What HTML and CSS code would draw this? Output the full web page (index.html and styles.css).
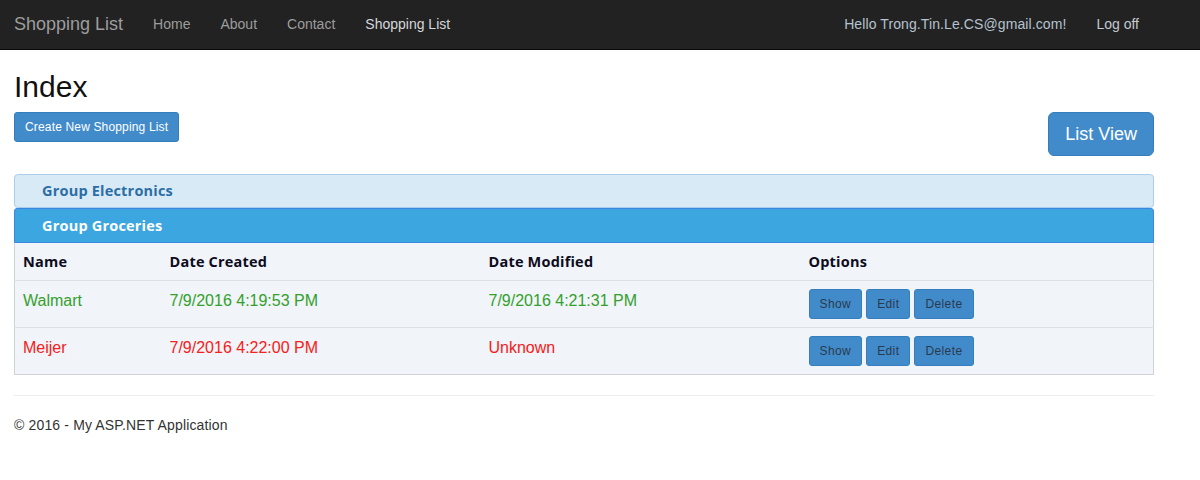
FILE: index.html
```html
<!DOCTYPE html>
<html>
<head>
<meta charset="utf-8">
<title>Index - Shopping List</title>
<link rel="stylesheet" href="styles.css">
</head>
<body>
<nav class="navbar">
  <div class="nav-left">
    <a class="brand" href="#">Shopping List</a>
    <a class="nav-link" href="#">Home</a>
    <a class="nav-link" href="#">About</a>
    <a class="nav-link" href="#">Contact</a>
    <a class="nav-link active" href="#">Shopping List</a>
  </div>
  <div class="nav-right">
    <a class="nav-link hello" href="#">Hello Trong.Tin.Le.CS@gmail.com!</a>
    <a class="nav-link logoff" href="#">Log off</a>
  </div>
</nav>
<main class="container">
  <h2 class="title">Index</h2>
  <div class="toolbar">
    <a class="btn btn-sm" href="#">Create New Shopping List</a>
    <a class="btn btn-lg" href="#">List View</a>
  </div>
  <div class="panel panel-light">Group Electronics</div>
  <div class="panel panel-active">Group Groceries</div>
  <table class="list-table">
    <thead>
      <tr>
        <th class="c-name">Name</th>
        <th class="c-created">Date Created</th>
        <th class="c-modified">Date Modified</th>
        <th class="c-options">Options</th>
      </tr>
    </thead>
    <tbody>
      <tr class="ok">
        <td>Walmart</td>
        <td>7/9/2016 4:19:53 PM</td>
        <td>7/9/2016 4:21:31 PM</td>
        <td class="opts"><a class="btn btn-xs" href="#">Show</a><a class="btn btn-xs" href="#">Edit</a><a class="btn btn-xs" href="#">Delete</a></td>
      </tr>
      <tr class="bad">
        <td>Meijer</td>
        <td>7/9/2016 4:22:00 PM</td>
        <td>Unknown</td>
        <td class="opts"><a class="btn btn-xs" href="#">Show</a><a class="btn btn-xs" href="#">Edit</a><a class="btn btn-xs" href="#">Delete</a></td>
      </tr>
    </tbody>
  </table>
  <hr class="rule">
  <footer class="footer">© 2016 - My ASP.NET Application</footer>
</main>
</body>
</html>
```
FILE: styles.css
```css
* { box-sizing: border-box; }
html, body { margin: 0; padding: 0; }
body {
  font-family: "Liberation Sans", Arial, sans-serif;
  font-size: 14px;
  line-height: 1.42857;
  color: #333;
  background: #fff;
}
a { text-decoration: none; }

.navbar {
  height: 50px;
  background: #222;
  border-bottom: 1px solid #080808;
  display: flex;
  justify-content: space-between;
  padding: 0 46px 0 0;
}
.nav-left, .nav-right { display: flex; align-items: stretch; }
.brand {
  font-size: 18px;
  line-height: 20px;
  padding: 14px 15px 15px 14px;
  color: #9d9d9d;
}
.nav-link {
  font-size: 14px;
  line-height: 20px;
  padding: 14px 15px 15px;
  color: #9d9d9d;
}
.nav-link.active { color: #d5d8dc; }
.nav-right .nav-link { color: #b6c2cf; }
.nav-link.hello { letter-spacing: 0.1px; }
.nav-link.logoff { color: #c3c9d0; }

.container {
  width: 1140px;
  margin-left: 14px;
}
.title {
  font-size: 30px;
  font-weight: 400;
  line-height: 1.1;
  color: #111;
  margin: 20px 0 9px;
}
.toolbar {
  display: flex;
  justify-content: space-between;
  align-items: flex-start;
  margin-bottom: 18px;
}
.btn {
  display: inline-block;
  background: #428bca;
  border: 1px solid #357ebd;
  border-radius: 3px;
  color: #fff;
}
.btn-sm {
  font-size: 12px;
  line-height: 18px;
  padding: 5px 10px;
  letter-spacing: 0.16px;
}
.btn-lg {
  font-size: 18px;
  line-height: 24px;
  padding: 9px 16px;
  border-radius: 6px;
}

.panel {
  font-family: "Open Sans", "Liberation Sans", sans-serif;
  font-weight: 700;
  font-size: 14.5px;
  line-height: 20px;
  padding: 6px 27px;
  letter-spacing: 0.2px;
}
.panel-light {
  background: #d9eaf7;
  border: 1px solid #aacde9;
  border-radius: 4px;
  color: #2b6ea6;
  height: 34px;
}
.panel-active {
  background: #3ba6e0;
  border: 1px solid #3b86e0;
  border-radius: 3px 3px 0 0;
  color: #fff;
  height: 35px;
  padding-top: 7px;
}

.list-table {
  width: 100%;
  border-collapse: collapse;
  background: #f1f4f8;
  border: 1px solid #cfd3d7;
  border-top: none;
}
.list-table th {
  font-family: "Open Sans", "Liberation Sans", sans-serif;
  font-weight: 700;
  font-size: 14.5px;
  letter-spacing: 0.2px;
  text-align: left;
  color: #0d0c1d;
  padding: 8px;
  line-height: 21px;
  border-bottom: 1px solid #dde0e3;
}
.list-table td {
  vertical-align: top;
  padding: 10px 8px 6px;
  font-size: 16px;
  line-height: 20px;
  border-bottom: 1px solid #dde0e3;
}
.list-table tbody tr:last-child td { border-bottom: none; }
.c-name { width: 147px; }
.c-created { width: 319px; }
.c-modified { width: 320px; }
.list-table tr.ok td { color: #33a02c; }
.list-table tr.bad td { color: #f52020; }
.list-table td.opts { font-size: 12px; padding: 8px; line-height: 30px; }
.btn-xs {
  font-size: 12px;
  line-height: 18px;
  padding: 5px 10px;
  margin-right: 4px;
  letter-spacing: 0.4px;
  vertical-align: top;
}
.list-table tr td.opts .btn-xs { color: #2a3a4e; }

.rule {
  border: 0;
  border-top: 1px solid #eee;
  margin: 20px 0 20px;
}
.footer {
  font-size: 14px;
  letter-spacing: 0.15px;
  color: #333;
}
```
